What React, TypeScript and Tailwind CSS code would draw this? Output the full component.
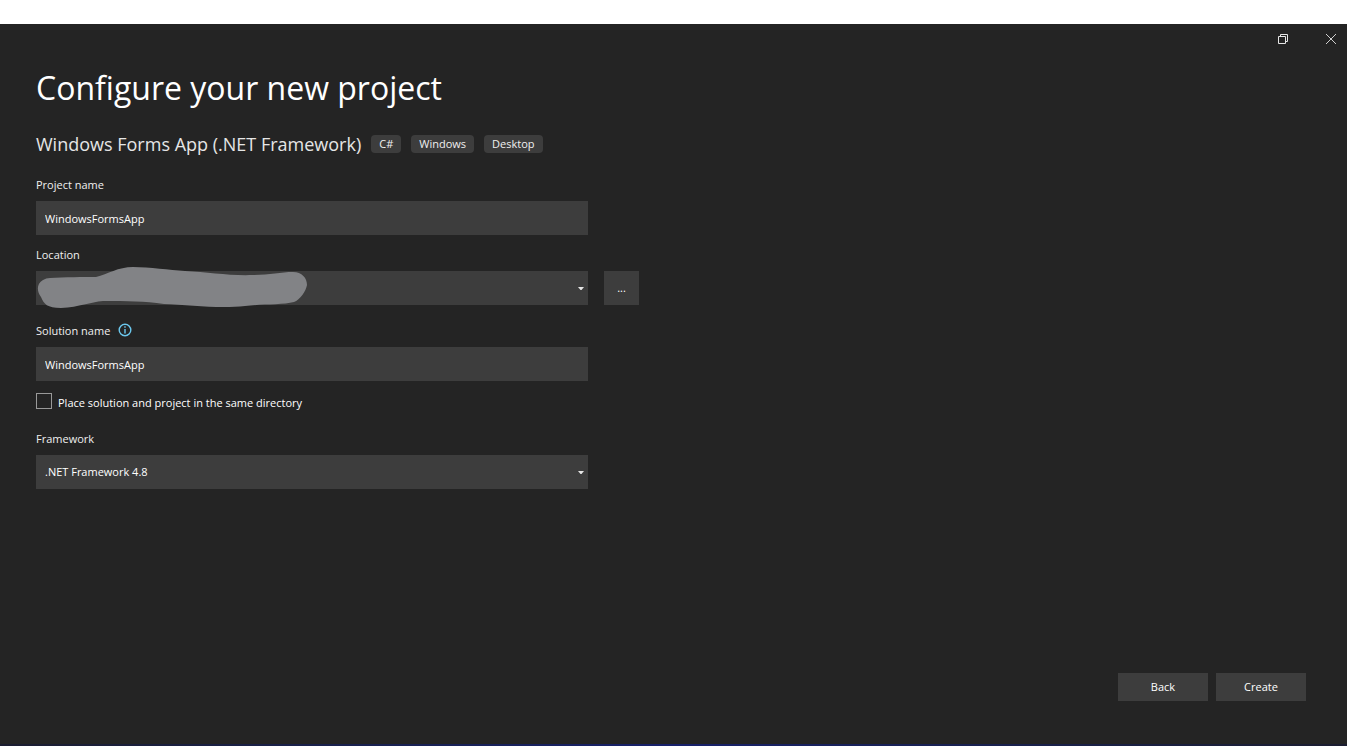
import { useState, type ReactNode } from 'react';

const TAGS = ['C#', 'Windows', 'Desktop'];

const fieldClass =
  'block w-full h-[34px] appearance-none rounded-none border-0 bg-[#3d3d3d] px-[9px] text-[11px] leading-4 text-white outline-none focus:ring-1 focus:ring-[#8a8a8a]';

function SelectBox({ id, children }: { id: string; children: ReactNode }) {
  return (
    <div className="relative">
      <select id={id} className={fieldClass}>
        {children}
      </select>
      <svg
        className="pointer-events-none absolute right-1 top-4"
        width="6"
        height="3"
        viewBox="0 0 6 3"
        aria-hidden="true"
      >
        <path d="M0 0h6L3.5 3h-1z" fill="#e6e6e6" />
      </svg>
    </div>
  );
}

function FieldLabel({ htmlFor, children }: { htmlFor: string; children: ReactNode }) {
  return (
    <label htmlFor={htmlFor} className="mb-2 block text-[11px] leading-4 text-[#f0f0f0]">
      {children}
    </label>
  );
}

export default function App() {
  const [projectName, setProjectName] = useState('WindowsFormsApp');
  const [solutionName, setSolutionName] = useState('WindowsFormsApp');
  const [sameDirectory, setSameDirectory] = useState(false);

  return (
    <div className="flex min-h-screen flex-col bg-[#242424] font-['Open_Sans','Noto_Sans',sans-serif] text-white">
      <div className="h-6 bg-white" />

      {/* Window controls */}
      <header className="flex h-[30px] items-center justify-end gap-8 pr-2">
        <button type="button" aria-label="Restore" className="flex size-4 items-center justify-center">
          <svg width="10" height="10" viewBox="0 0 10 10" fill="none" stroke="#e6e6e6">
            <path d="M0.5 2.5h7v7h-7z" />
            <path d="M2.5 2.5v-2h7v7h-2" />
          </svg>
        </button>
        <button type="button" aria-label="Close" className="flex size-4 items-center justify-center">
          <svg width="10" height="10" viewBox="0 0 10 10" stroke="#d0d0d0">
            <path d="M0 0l10 10M10 0L0 10" />
          </svg>
        </button>
      </header>

      <main className="grow px-9 pt-[10px]">
        <h1 className="text-[32px] leading-[48px]">Configure your new project</h1>

        <div className="mt-5 flex items-center">
          <h2 className="text-[18px] leading-6 text-[#e6e6e6]">Windows Forms App (.NET Framework)</h2>
          <ul className="ml-[10px] flex gap-[10px]">
            {TAGS.map((tag) => (
              <li key={tag} className="rounded-sm bg-[#3d3d3d] px-2 text-[11px] leading-[18px] text-[#f0f0f0]">
                {tag}
              </li>
            ))}
          </ul>
        </div>

        <form id="project-form" className="mt-[21px]" onSubmit={(e) => e.preventDefault()}>
          <div className="max-w-[552px]">
            <FieldLabel htmlFor="project-name">Project name</FieldLabel>
            <input
              id="project-name"
              type="text"
              value={projectName}
              onChange={(e) => setProjectName(e.target.value)}
              className={fieldClass}
            />
          </div>

          <div className="mt-3">
            <FieldLabel htmlFor="location">Location</FieldLabel>
            <div className="flex gap-4">
              <div className="relative w-full max-w-[552px]">
                <SelectBox id="location">
                  <option value=""></option>
                </SelectBox>
                <svg
                  className="pointer-events-none absolute -top-1 left-0"
                  width="272"
                  height="42"
                  viewBox="0 0 272 42"
                  aria-hidden="true"
                >
                  <path
                    d="M14 11C28 10 48 10 60 10C72 7 82 0 97 0C114 0 133 3 149 4C172 5 194 9 217 8C233 8 245 5 257 5C266 5 271 11 271 18C270 24 264 33 258 35C246 38 224 37 209 39C184 42 153 38 128 37C108 34 92 34 67 34C54 35 44 40 25 41C11 41 8 37 5 30C1 25 0 17 7 13Q10 11 14 11Z"
                    fill="#828386"
                  />
                </svg>
              </div>
              <button
                type="button"
                aria-label="Browse"
                className="h-[34px] w-[35px] shrink-0 bg-[#3d3d3d] text-[11px] leading-4 hover:bg-[#4a4a4a]"
              >
                ...
              </button>
            </div>
          </div>

          <div className="mt-[18px] max-w-[552px]">
            <div className="flex gap-2">
              <FieldLabel htmlFor="solution-name">Solution name</FieldLabel>
              <svg width="14" height="14" viewBox="0 0 14 14" fill="none" role="img" aria-label="Info">
                <circle cx="7" cy="7" r="5.8" stroke="#6cc8ee" strokeWidth="1.4" />
                <path d="M7 6v4.5M7 3.2v1.6" stroke="#6cc8ee" strokeWidth="1.4" />
              </svg>
            </div>
            <input
              id="solution-name"
              type="text"
              value={solutionName}
              onChange={(e) => setSolutionName(e.target.value)}
              className={fieldClass}
            />
          </div>

          <div className="mt-3 flex items-start gap-[6px]">
            <input
              id="same-directory"
              type="checkbox"
              checked={sameDirectory}
              onChange={(e) => setSameDirectory(e.target.checked)}
              className="size-4 appearance-none border border-[#999999] bg-transparent checked:bg-[#999999]"
            />
            <label htmlFor="same-directory" className="text-[11px] leading-5">
              Place solution and project in the same directory
            </label>
          </div>

          <div className="mt-[18px] max-w-[552px]">
            <FieldLabel htmlFor="framework">Framework</FieldLabel>
            <SelectBox id="framework">
              <option>.NET Framework 4.8</option>
            </SelectBox>
          </div>
        </form>
      </main>

      <footer className="flex justify-end gap-2 pr-[41px] pb-[43px] text-[11px] leading-4">
        <button type="button" className="h-7 w-[90px] bg-[#3d3d3d] hover:bg-[#4a4a4a]">
          Back
        </button>
        <button type="submit" form="project-form" className="h-7 w-[90px] bg-[#3d3d3d] hover:bg-[#4a4a4a]">
          Create
        </button>
      </footer>
      <div className="h-[2px] bg-linear-to-r from-[#1b1d30] via-[#17206a] to-[#1b1d30]" />
    </div>
  );
}
